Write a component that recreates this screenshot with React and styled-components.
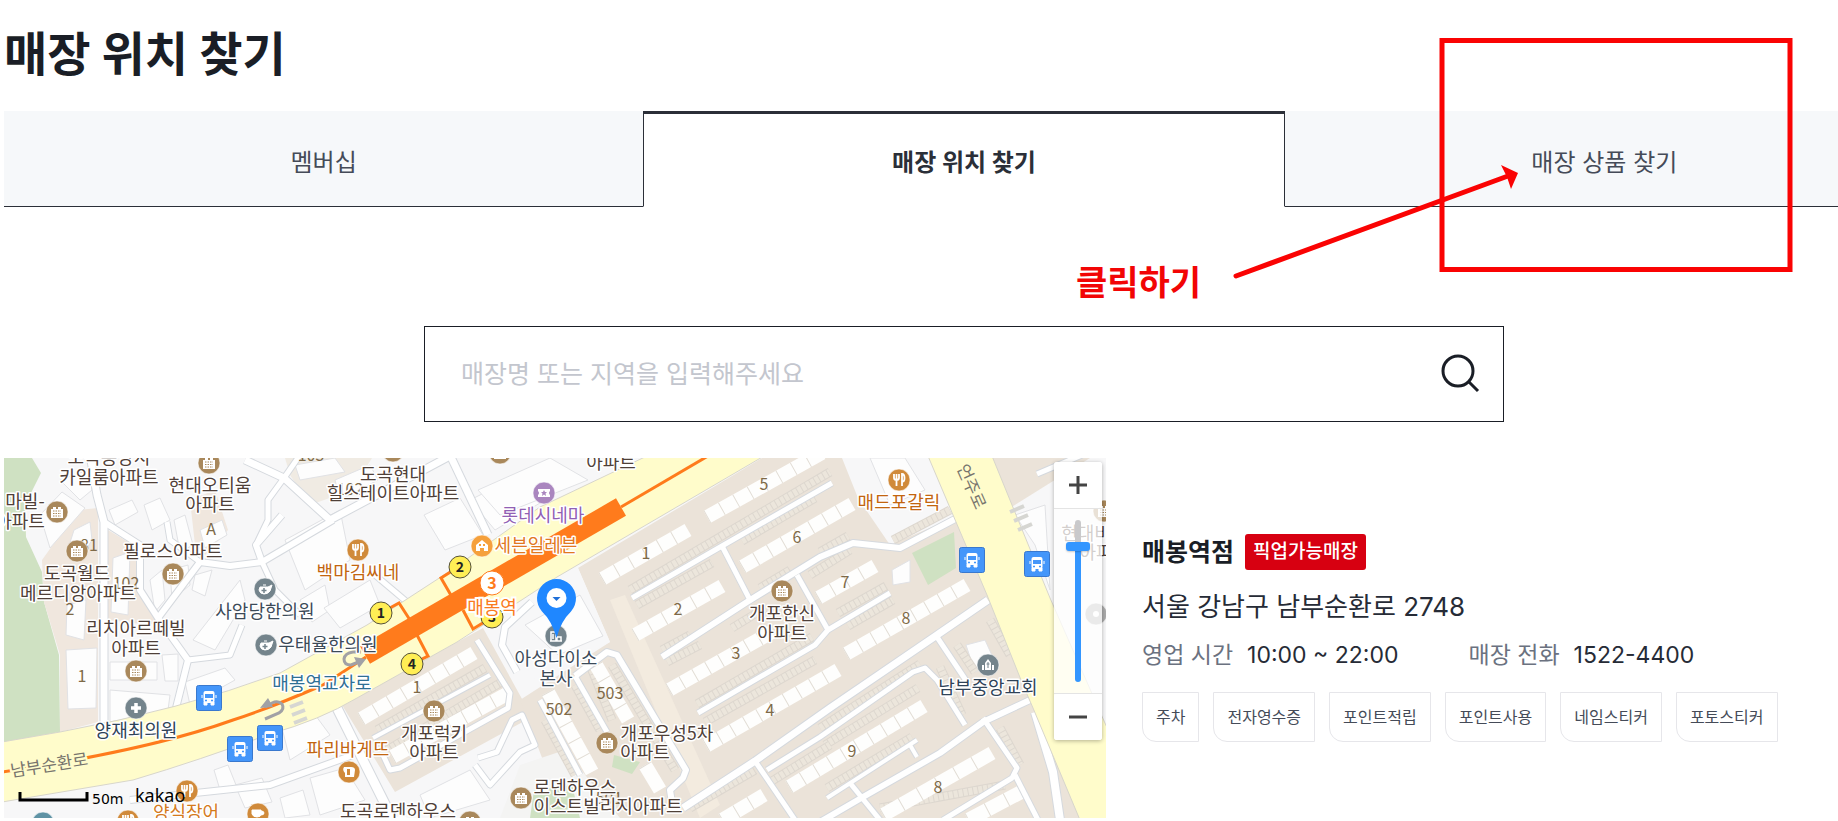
import React, { useState } from "react";
import styled, { createGlobalStyle, css } from "styled-components";

const GlobalStyle = createGlobalStyle`
  * {
    box-sizing: border-box;
  }
  body {
    margin: 0;
    background: #fff;
    color: #1a1e26;
    font-family: Inter, "Noto Sans CJK KR", sans-serif;
  }
`;

const tabs = ["멤버십", "매장 위치 찾기", "매장 상품 찾기"];

const services = [
  "주차",
  "전자영수증",
  "포인트적립",
  "포인트사용",
  "네임스티커",
  "포토스티커",
];

const Page = styled.div`
  position: relative;
  overflow: hidden;
`;

const Content = styled.main`
  min-width: 1924px;
  padding: 16px 0 3px 4px;
`;

const Title = styled.h1`
  margin: 0 0 19px;
  font-size: 47px;
  line-height: 76px;
  font-weight: 700;
`;

const TabList = styled.div`
  display: flex;
`;

const Tab = styled.button`
  flex: 1 1 0;
  height: 96px;
  padding: 3px 0 0;
  border: 0;
  border-bottom: 1px solid #2b2f38;
  background: #f6f8fa;
  color: #454b58;
  font-family: inherit;
  font-size: 24px;
  cursor: pointer;
  ${({ $active }) =>
    $active &&
    css`
      padding: 0;
      border: 1px solid #2b2f38;
      border-top-width: 3px;
      border-bottom-color: #fff;
      background: #fff;
      color: #2b2f38;
      font-weight: 700;
    `}
`;

const SearchForm = styled.form`
  display: flex;
  align-items: center;
  width: 1080px;
  height: 96px;
  margin: 119px auto 36px;
  padding: 0 18px 0 36px;
  border: 1px solid #1a1e26;
`;

const SearchInput = styled.input`
  flex: 1;
  padding: 0;
  border: 0;
  outline: 0;
  font-family: inherit;
  font-size: 25px;
  &::placeholder {
    color: #c3c6ce;
  }
`;

const SearchButton = styled.button`
  display: flex;
  padding: 0;
  border: 0;
  background: none;
  cursor: pointer;
`;

const Result = styled.div`
  display: flex;
  align-items: flex-start;
  gap: 36px;
`;

const MapBox = styled.div`
  position: relative;
  flex: 0 0 1102px;
`;

const MapSvg = styled.svg`
  display: block;
  width: 100%;
  font-family: "Noto Sans CJK KR", sans-serif;
`;

const ZoomControl = styled.div`
  position: absolute;
  top: 4px;
  right: 4px;
  display: flex;
  flex-direction: column;
  width: 48px;
  border-radius: 3px;
  background: rgba(255, 255, 255, 0.75);
  box-shadow: 0 1px 4px rgba(0, 0, 0, 0.3);
`;

const ZoomButton = styled.button`
  display: flex;
  align-items: center;
  justify-content: center;
  height: 46px;
  padding: 0;
  border: 0;
  border-radius: 3px;
  background: #fff;
  cursor: pointer;
`;

const ZoomTrack = styled.div`
  display: flex;
  justify-content: center;
  padding: 11px 0;
  border-top: 1px solid #e4e4e4;
  border-bottom: 1px solid #e4e4e4;
`;

const ZoomRange = styled.input`
  appearance: none;
  writing-mode: vertical-lr;
  direction: rtl;
  width: 24px;
  height: 162px;
  margin: 0;
  background: none;
  &::-webkit-slider-runnable-track {
    width: 6px;
    border-radius: 3px;
    background: linear-gradient(#c9c9cb 15%, #3396ff 15%);
  }
  &::-webkit-slider-thumb {
    appearance: none;
    width: 24px;
    height: 9px;
    margin-left: -9px;
    border-radius: 3px;
    background: #3396ff;
    box-shadow: 0 1px 2px rgba(0, 0, 0, 0.2);
  }
`;

const Store = styled.section`
  padding-top: 76px;
`;

const StoreHead = styled.div`
  display: flex;
  align-items: center;
  gap: 11px;
`;

const StoreName = styled.h2`
  margin: 0;
  font-size: 25px;
  line-height: 36px;
`;

const Badge = styled.span`
  padding: 0 8px;
  border-radius: 3px;
  background: #d70011;
  color: #fff;
  font-size: 19px;
  font-weight: 500;
  line-height: 36px;
`;

const Address = styled.p`
  margin: 18px 0 10px;
  color: #262b36;
  font-size: 26px;
  line-height: 38px;
`;

const Facts = styled.dl`
  display: flex;
  margin: 0 0 18px;
  font-size: 23px;
  line-height: 38px;
`;

const FactName = styled.dt`
  margin-right: 14px;
  color: #6b7280;
`;

const FactValue = styled.dd`
  margin: 0 70px 0 0;
  color: #262b36;
`;

const ServiceList = styled.ul`
  display: flex;
  gap: 14px;
  margin: 0;
  padding: 0;
  list-style: none;
`;

const Service = styled.li`
  padding: 0 13px;
  border: 1px solid #e6e6ea;
  border-bottom-left-radius: 14px;
  color: #454b58;
  font-size: 16px;
  line-height: 48px;
`;

const NoteArrow = styled.svg`
  position: absolute;
  top: 38px;
  left: 1230px;
  pointer-events: none;
`;

const NoteText = styled.strong`
  position: absolute;
  top: 260px;
  left: 1076px;
  color: #f20505;
  font-size: 34px;
  line-height: 46px;
`;

// Map data, in map units
const whiteRoads = [
  ["M90 455 97 495 104 522V730", 7],
  ["M104 522 140 545V590L158 618 188 660 175 712", 6],
  ["M158 618 200 562 230 566 262 562 256 545 282 515", 6],
  ["M167 522 170 540 200 562", 5],
  ["M188 660 230 655 242 625", 5],
  ["M262 562 275 590 300 615", 5],
  ["M245 460 284 478 330 520 450 456", 7],
  ["M284 478 268 500 268 520 256 545", 5],
  ["M284 478 300 455", 5],
  ["M262 562 333 520", 6],
  ["M450 455 488 535", 7],
  ["M375 575 407 602", 5],
  ["M130 800 270 785 353 755", 6],
  ["M337 708 393 820", 9],
  ["M383 755 390 770 400 768 508 708 510 693 477 640", 5],
  ["M373 738 490 675", 4],
  ["M517 672 502 645 505 627 532 602", 6],
  ["M478 758 497 752 512 720 522 715 535 745 520 752 490 785 475 765", 5],
  ["M575 676 607 652 617 655 686 770 683 778 670 790 672 803", 6],
  ["M575 676 607 732", 5],
  ["M540 700 580 775", 5],
  ["M632 598 722 546 832 483", 5],
  ["M662 657 747 602 820 557 853 543 900 548 957 518", 6],
  ["M722 546 750 600", 5],
  ["M698 713 815 645 828 630 890 593", 5],
  ["M797 575 828 630", 5],
  ["M683 808 755 761 830 708 937 635 988 600", 7],
  ["M767 770 820 737 913 672 925 668 937 680 965 725", 5],
  ["M755 761 795 820", 5],
  ["M827 798 917 740", 4],
  ["M910 745 917 757", 4],
  ["M820 822 863 797 940 753 983 722 1030 700", 6],
  ["M937 637 967 682", 5],
  ["M983 718 1017 768 1012 778 943 820", 5],
  ["M1015 775 1038 820", 5],
  ["M850 783 880 820", 5],
  ["M1035 712 1053 772 1060 820", 8],
  ["M1037 474 1082 455", 5],
];

const parking = [
  "M630 590 830 472",
  "M637 605 712 563",
  "M742 541 815 498",
  "M662 650 690 635",
  "M667 662 700 645",
  "M732 628 765 608",
  "M760 588 790 570",
  "M810 575 850 550",
  "M697 704 812 637",
  "M705 722 815 660",
  "M820 552 848 536",
  "M893 540 950 510",
  "M838 613 886 586",
  "M848 626 893 600",
  "M820 728 920 664",
  "M825 745 918 688",
  "M940 667 962 715",
  "M772 781 830 745",
  "M827 788 912 737",
  "M690 808 755 770",
  "M880 808 1005 785",
  "M1000 728 1020 765",
  "M957 645 975 672",
  "M990 620 1010 655",
  "M377 730 485 668",
  "M387 750 505 680",
  "M590 665 612 720",
  "M612 665 675 770",
  "M545 720 575 775",
  "M575 685 600 730",
];

// x1, y1, x2, y2, number of units
const blocks = [
  [602, 579, 688, 530, 6],
  [707, 517, 822, 453, 8],
  [742, 567, 852, 504, 8],
  [635, 635, 722, 586, 6],
  [669, 690, 772, 632, 8],
  [706, 746, 838, 670, 10],
  [818, 598, 875, 566, 4],
  [846, 654, 967, 585, 9],
  [789, 787, 924, 706, 10],
  [883, 815, 992, 753, 6],
  [722, 820, 764, 795, 3],
  [361, 719, 474, 653, 8],
  [392, 757, 507, 694, 8],
  [548, 692, 592, 772, 5],
  [596, 665, 628, 720, 4],
  [645, 765, 660, 790, 1],
  [968, 820, 1025, 790, 3],
];

const buildings = [
  "M66 650 97 648 96 708 68 709z",
  "M67 605 86 600 84 640 66 635z",
  "M74 530 90 522 92 540 80 560 67 552z",
  "M113 558 130 552 128 615 111 612z",
  "M40 515 62 492 85 508 50 548z",
  "M60 480 88 470 92 490 80 500z",
  "M109 510 132 500 138 512 115 525z",
  "M144 505 160 498 170 520 152 530z",
  "M174 520 185 515 193 545 180 552z",
  "M200 530 222 520 227 535 205 548z",
  "M150 580 162 570 165 600 155 612z",
  "M170 570 188 565 190 585 172 600z",
  "M195 575 212 570 205 596 192 590z",
  "M110 662 157 662 157 680 110 680z",
  "M162 655 178 654 178 681 165 681z",
  "M110 690 170 695 168 710 110 722z",
  "M193 640 240 580 245 600 215 650z",
  "M185 682 225 668 235 680 190 705z",
  "M285 540 340 510 350 560 305 590z",
  "M300 600 325 585 330 610 312 622z",
  "M324 608 370 580 380 605 340 628z",
  "M424 515 460 498 483 535 445 550z",
  "M470 500 530 470 545 500 495 530z",
  "M478 490 550 458 588 480 500 515z",
  "M525 625 580 595 603 636 558 655z",
  "M280 720 310 708 330 735 290 760z",
  "M235 785 262 778 272 802 245 808z",
  "M214 770 228 765 236 785 220 790z",
  "M280 798 303 790 310 815 285 818z",
  "M310 778 345 768 365 800 320 815z",
  "M420 795 470 770 490 800 430 818z",
  "M335 480 370 465 378 480 340 500z",
  "M295 465 335 458 345 472 300 480z",
  "M870 458 905 458 925 490 890 505z",
  "M892 570 910 560 910 582 893 585z",
  "M966 645 985 640 995 662 975 672z",
  "M1015 515 1045 505 1050 590 1035 545z",
];

const labels = [
  ["도곡동양지", 109, 464],
  ["카일룸아파트", 109, 484],
  ["현대오티움", 210, 492],
  ["아파트", 210, 511],
  ["마빌-", 25, 508],
  ["아파트", 20, 528],
  ["필로스아파트", 173, 558],
  ["도곡월드", 77, 580],
  ["메르디앙아파트", 78, 600],
  ["리치아르떼빌", 136, 635],
  ["아파트", 136, 655],
  ["사암당한의원", 265, 618, "#3c4a58"],
  ["우태율한의원", 328, 651, "#3c4a58"],
  ["양재최의원", 136, 737, "#2f4358"],
  ["매봉역교차로", 322, 690, "#2f6f94"],
  ["도곡현대", 393, 481],
  ["힐스테이트아파트", 393, 500],
  ["백마김씨네", 358, 579, "#c2650f"],
  ["롯데시네마", 543, 522, "#9160b4"],
  ["세븐일레븐", 536, 552, "#e27820"],
  ["아파트", 611, 469],
  ["파리바게뜨", 348, 756, "#c2650f"],
  ["개포럭키", 434, 740],
  ["아파트", 434, 759],
  ["도곡로덴하우스", 398, 818],
  ["로덴하우스", 575, 794],
  ["이스트빌리지아파트", 608, 813],
  ["아성다이소", 556, 665, "#3c4a58"],
  ["본사", 556, 685, "#3c4a58"],
  ["개포우성5차", 667, 740],
  ["아파트", 645, 759],
  ["개포한신", 782, 620],
  ["아파트", 782, 640],
  ["매드포갈릭", 899, 509, "#c2650f"],
  ["남부중앙교회", 988, 694, "#2f4358"],
  ["양식장어", 186, 819, "#d47a1c"],
  ["현대비", 1086, 540],
  ["아파", 1096, 559],
];

const numbers = [
  ["105", 311, 461],
  ["102", 350, 495],
  ["A", 211, 535],
  ["81", 89, 551],
  ["102", 126, 589],
  ["2", 70, 615],
  ["1", 82, 682],
  ["1", 417, 693],
  ["503", 610, 699],
  ["502", 559, 715],
  ["1", 646, 559],
  ["5", 764, 490],
  ["6", 797, 543],
  ["2", 678, 615],
  ["3", 736, 659],
  ["4", 770, 716],
  ["7", 845, 588],
  ["8", 906, 624],
  ["9", 852, 757],
  ["501", 609, 804],
  ["8", 938, 793],
];

const exits = [
  [1, 381, 613],
  [2, 460, 567],
  [3, 492, 617],
  [4, 412, 664],
];

const glyphs = {
  apartment: (
    <>
      <path d="M-6-3h2v-2h3v2h2v-2h3v2h2v9H-6z" fill="#fff" />
      <path
        d="M-4-1h8M-4 1.500h8M-4 4h8"
        stroke="#a9885b"
        strokeDasharray="1.500 1"
      />
    </>
  ),
  food: (
    <path
      d="M-5-6v4q0 2 2.500 2t2.500-2v-4M-2.500-6V6M3 6V-6q2.500 0 2.500 4T3 1.500"
      stroke="#fff"
      strokeWidth="1.800"
      fill="none"
    />
  ),
  bread: (
    <>
      <path d="M-5-5H2q4 0 4 3L5 5h-9V1q-3-3-1-6z" fill="#fff" />
      <path d="M-2-3h3v6h-3z" fill="#d08a3a" />
    </>
  ),
  cup: (
    <path
      d="M-6-4H3V0q0 3-4 3t-5-3zM3-3q3 0 3 2T3 1"
      fill="#fff"
      stroke="#fff"
    />
  ),
  herb: (
    <>
      <path
        d="M-5-2H3L7-4 5 2Q3 5-1 5T-6 1zM-2-4h3"
        fill="#fff"
        stroke="#fff"
      />
      <path d="M-1-1v5M-3.500 1.500h5" stroke="#74848c" strokeWidth="1.500" />
    </>
  ),
  plus: <path d="M0-5V5M-5 0H5" stroke="#fff" strokeWidth="3.500" />,
  ticket: (
    <>
      <path d="M-6-4H6v2q-2 2 0 4v2H-6V2q2-2 0-4z" fill="#fff" />
      <path d="m0-3 1 2h2L1.500.500 2 3 0 1.500-2 3l.500-2.500L-3-1h2z" fill="#aa86bf" />
    </>
  ),
  shop: (
    <>
      <path d="M-6-1 0-6 6-1V5H2V2h-4v3h-4z" fill="#fff" />
      <path d="M-3-1h2M1-1h2" stroke="#f5a03c" strokeWidth="2" />
    </>
  ),
  office: (
    <path
      d="M-5 5V-4h5v9M1 5v-4h4v4M-6 5H6M-3-2v5"
      stroke="#fff"
      strokeWidth="1.500"
      fill="none"
    />
  ),
  church: (
    <>
      <path d="M-3 5V-2L0-6 3-2V5zM-6 5V0h2v5zM4 5V0h2v5z" fill="#fff" />
      <path d="M0-3v6M-1.500-1h3" stroke="#74848c" />
    </>
  ),
  dot: <circle r="3" fill="#fff" />,
};

const pois = [
  ["apartment", 57, 512],
  ["apartment", 77, 551],
  ["apartment", 173, 574],
  ["apartment", 209, 463],
  ["apartment", 136, 671],
  ["apartment", 393, 451],
  ["apartment", 500, 453],
  ["apartment", 434, 711],
  ["apartment", 470, 822],
  ["apartment", 521, 798],
  ["apartment", 607, 743],
  ["apartment", 782, 591],
  ["apartment", 1104, 511],
  ["food", 358, 550, "#d08a3a"],
  ["food", 899, 480, "#d08a3a"],
  ["food", 187, 791, "#d08a3a"],
  ["food", 128, 821, "#d08a3a"],
  ["bread", 349, 772, "#d08a3a"],
  ["cup", 258, 814, "#d08a3a"],
  ["herb", 265, 589, "#74848c"],
  ["herb", 266, 645, "#74848c"],
  ["plus", 136, 708, "#74848c"],
  ["plus", 43, 823, "#5f93a5"],
  ["dot", 1096, 614, "#aaa"],
  ["ticket", 544, 493, "#aa86bf"],
  ["shop", 482, 546, "#f5a03c"],
  ["office", 556, 636, "#74848c"],
  ["church", 988, 665, "#74848c"],
];

const busStops = [
  [209, 698],
  [240, 749],
  [270, 738],
  [972, 560],
  [1037, 564],
];

const Poi = ({ kind, x, y, color = "#a9885b" }) => (
  <g transform={`translate(${x} ${y})`}>
    <circle r="11" fill={color} stroke="#fff" strokeOpacity="0.600" />
    {glyphs[kind]}
  </g>
);

const BusStop = ({ x, y }) => (
  <g transform={`translate(${x} ${y})`}>
    <rect
      x="-12.500"
      y="-12.500"
      width="25"
      height="25"
      rx="2"
      fill="#4496fa"
      stroke="#3978ce"
    />
    <rect x="-5.500" y="-7" width="11" height="12" rx="2" fill="#fff" />
    <path d="M-5 4h3v3h-3zM2 4h3v3H2zM-7-3v3M7-3v3" fill="#fff" stroke="#fff" />
    <path d="M-4-4h8v4h-8z" fill="#4496fa" />
    <path d="M-4 2.500h2M2 2.500h2" stroke="#4496fa" strokeWidth="1.500" />
  </g>
);

const Block = ({ x1, y1, x2, y2, units }) => {
  const length = Math.hypot(x2 - x1, y2 - y1);
  const unit = length / units;
  return (
    <g stroke="#fefefd" strokeWidth="14">
      <path d={`M${x1} ${y1}L${x2} ${y2}`} />
      <path
        d={`M${x1} ${y1}L${x2} ${y2}`}
        stroke="#e2ddd5"
        strokeDasharray={`1 ${unit - 1}`}
        strokeDashoffset={-unit}
      />
    </g>
  );
};

const StoreMap = () => (
  <MapSvg viewBox="4 458 1102 360" role="img" aria-label="매장 지도">
    <rect x="4" y="458" width="1102" height="360" fill="#f7f7f8" />
    <path
      d="M4 458H32L41 473 25 505 26 537 42 572 44 602 59 655 60 732 4 742z"
      fill="#cfe1c2"
    />
    <path d="M60 732V655L44 602 42 560 78 510 98 508V722z" fill="#f0e7de" />
    <path
      d="M108 530 138 548 142 600 158 620 150 625 108 620zM190 500 215 490 228 530 205 555 195 545z"
      fill="#f0e7de"
    />
    <path d="M285 458H372L352 490 310 505 290 475z" fill="#f0ebe3" />
    <path d="M342 705 483 628 527 708 560 690 600 818H565L530 718 395 792z" fill="#ebe3d9" />
    <path
      d="M578 568 762 458H842L858 498 890 545 955 517 1106 818H565L520 700 610 642z"
      fill="#ebe3d9"
    />
    <path d="M578 568 610 642 535 680 500 625z" fill="#f7f7f8" />
    <path d="M520 765 565 750 620 818H500z" fill="#f4f4f3" />
    <path d="M610 600 625 595 720 805 700 818z" fill="#f3ebdf" />
    <path d="M534 790 572 785 580 818H530zM614 755 640 762 632 774 612 767z" fill="#cfe1c2" />
    <path d="M992 458H1106V730L1050 598z" fill="#f7f7f8" />
    <path d="M992 458H1090L1010 508z" fill="#ebe3d9" />
    <path d="M912 553 954 532 956 568 928 585z" fill="#cfe1c2" />

    <g fill="#fdfdfd" stroke="#e1e2e5">
      {buildings.map((d) => (
        <path key={d} d={d} />
      ))}
    </g>
    <g fill="none">
      {parking.map((d) => (
        <g key={d}>
          <path d={d} stroke="#ddd7cf" strokeWidth="9" />
          <path
            d={d}
            stroke="#ece6dc"
            strokeWidth="7"
            strokeDasharray="4 1"
          />
        </g>
      ))}
    </g>
    {blocks.map(([x1, y1, x2, y2, units]) => (
      <Block key={`${x1}-${y1}`} x1={x1} y1={y1} x2={x2} y2={y2} units={units} />
    ))}
    <g fill="none" stroke="#d5d9de" strokeLinejoin="round">
      {whiteRoads.map(([d, width]) => (
        <path key={d} d={d} strokeWidth={width + 2} />
      ))}
    </g>
    <g fill="none" stroke="#fff" strokeLinejoin="round">
      {whiteRoads.map(([d, width]) => (
        <path key={d} d={d} strokeWidth={width} />
      ))}
    </g>

    <g fill="#fffccb" stroke="#d8d6cb">
      <path d="M2 742 60 732Q180 710 280 673L367 625 447 573 540 507 647 456H764L557 577 457 642 357 698Q320 720 270 734 200 760 133 780L2 802z" />
      <path d="M928 456 987 595 1023 685 1033 708 1080 820H1108V730L1050 598 992 456z" />
    </g>
    <g stroke="#d6d6d2" strokeWidth="4">
      <path d="M1010 512l14-6M1014 521l14-6M1018 530l14-6M290 707l13-5M292 715l13-5M294 723l13-5" />
    </g>

    <g fill="none" stroke="#ff7b1c" strokeWidth="3">
      <path d="M2 772Q150 750 233 720 270 708 323 685L366 657" />
      <path d="M621 507 708 456" />
      <path d="M365 655 621 507" strokeWidth="20" />
      <path d="M452 597 441 578 452 571M410 620 399 603 388 609M463 610 473 629 486 621M417 635 428 656 418 661" />
    </g>
    <g fill="none" stroke="#a1a1a5" strokeWidth="3">
      <path d="M361 652h-8q-8 1-9 7 0 6 7 6l10-4" />
      <path d="M265 719l14-6q6-4 3-9-4-4-10-1l-7 4" />
    </g>
    <path d="M354 657l12 2-7 9zM268 698l-8 10 13-1z" fill="#a1a1a5" />

    <g fontSize="16" fill="#7e6a48" textAnchor="middle">
      {numbers.map(([text, x, y]) => (
        <text key={`${x}-${y}`} x={x} y={y}>
          {text}
        </text>
      ))}
    </g>

    {busStops.map(([x, y]) => (
      <BusStop key={x} x={x} y={y} />
    ))}
    {pois.map(([kind, x, y, color]) => (
      <Poi key={`${x}-${y}`} kind={kind} x={x} y={y} color={color} />
    ))}

    <g fontSize="14" fontWeight="700" textAnchor="middle">
      {exits.map(([number, x, y]) => (
        <g key={number}>
          <circle cx={x} cy={y} r="11" fill="#ffee55" stroke="#55513a" />
          <text x={x} y={y + 5} fill="#222">
            {number}
          </text>
        </g>
      ))}
      <circle cx="492" cy="583" r="12" fill="#fff" stroke="#ff7b1c" strokeWidth="1" />
      <text x="492" y="589" fontSize="16" fill="#ff7b1c">
        3
      </text>
      <text
        x="492"
        y="614"
        fontSize="18"
        fontWeight="400"
        fill="#fa7a20"
        stroke="#fff"
        strokeWidth="4"
        paintOrder="stroke"
      >
        매봉역
      </text>
    </g>

    <g
      fontSize="18"
      fontWeight="400"
      textAnchor="middle"
      stroke="#fff"
      strokeWidth="3"
      strokeLinejoin="round"
      paintOrder="stroke"
    >
      {labels.map(([text, x, y, color = "#4f4038"]) => (
        <text key={`${x}-${y}`} x={x} y={y} fill={color}>
          {text}
        </text>
      ))}
    </g>
    <g
      fontSize="17"
      fill="#77746d"
      textAnchor="middle"
      stroke="#fffccb"
      strokeWidth="4"
      paintOrder="stroke"
    >
      <text transform="translate(50 771) rotate(-9)">남부순환로</text>
      <text transform="translate(966 489) rotate(66)">언주로</text>
    </g>

    <path
      d="M556.500 638Q552 621 542 611.500A19.500 19.500 0 1 1 571 611.500Q561 621 556.500 638z"
      fill="#1f87ff"
    />
    <circle cx="556.500" cy="598" r="10" fill="#fff" />
    <path d="M552.500 597h8l-4 4z" fill="#1f6fd8" />

    <path d="M20 792v8h67v-8" fill="none" stroke="#000" strokeWidth="3" />
    <text x="92" y="804" fontSize="14" fontFamily="DejaVu Sans, sans-serif">
      50m
    </text>
    <text x="135" y="802" fontSize="18" fontFamily="Noto Sans, sans-serif">
      kakao
    </text>
  </MapSvg>
);

const App = () => {
  const [activeTab, setActiveTab] = useState(1);
  const [keyword, setKeyword] = useState("");
  const [zoom, setZoom] = useState(12);

  return (
    <Page>
      <GlobalStyle />
      <Content>
        <Title>매장 위치 찾기</Title>
        <TabList role="tablist">
          {tabs.map((name, index) => (
            <Tab
              key={name}
              type="button"
              role="tab"
              aria-selected={index === activeTab}
              $active={index === activeTab}
              onClick={() => setActiveTab(index)}
            >
              {name}
            </Tab>
          ))}
        </TabList>

        <SearchForm role="search" onSubmit={(e) => e.preventDefault()}>
          <SearchInput
            type="text"
            aria-label="매장 검색"
            placeholder="매장명 또는 지역을 입력해주세요"
            value={keyword}
            onChange={(e) => setKeyword(e.target.value)}
          />
          <SearchButton type="submit" aria-label="검색">
            <svg width="48" height="48" fill="none" stroke="#1a1e26" strokeWidth="3">
              <circle cx="21" cy="21" r="15" />
              <path d="M32 32l9 9" />
            </svg>
          </SearchButton>
        </SearchForm>

        <Result>
          <MapBox>
            <StoreMap />
            <ZoomControl>
              <ZoomButton
                type="button"
                aria-label="확대"
                onClick={() => setZoom(Math.min(14, zoom + 1))}
              >
                <svg width="18" height="18" stroke="#444" strokeWidth="3">
                  <path d="M9 0v18M0 9h18" />
                </svg>
              </ZoomButton>
              <ZoomTrack>
                <ZoomRange
                  type="range"
                  aria-label="지도 배율"
                  min="0"
                  max="14"
                  value={zoom}
                  onChange={(e) => setZoom(Number(e.target.value))}
                />
              </ZoomTrack>
              <ZoomButton
                type="button"
                aria-label="축소"
                onClick={() => setZoom(Math.max(0, zoom - 1))}
              >
                <svg width="18" height="18" stroke="#444" strokeWidth="3">
                  <path d="M0 9h18" />
                </svg>
              </ZoomButton>
            </ZoomControl>
          </MapBox>

          <Store>
            <StoreHead>
              <StoreName>매봉역점</StoreName>
              <Badge>픽업가능매장</Badge>
            </StoreHead>
            <Address>서울 강남구 남부순환로 2748</Address>
            <Facts>
              <FactName>영업 시간</FactName>
              <FactValue>10:00 ~ 22:00</FactValue>
              <FactName>매장 전화</FactName>
              <FactValue>1522-4400</FactValue>
            </Facts>
            <ServiceList>
              {services.map((name) => (
                <Service key={name}>{name}</Service>
              ))}
            </ServiceList>
          </Store>
        </Result>
      </Content>

      <NoteText>클릭하기</NoteText>
      <NoteArrow width="564" height="244" fill="none" stroke="#fa0303" strokeWidth="5">
        <path d="M212 2.500h348v229H212z" />
        <path d="M6 238 278 138" strokeLinecap="round" />
        <path d="M288 135 271 127 277 139 281 151z" fill="#fa0303" stroke="none" />
      </NoteArrow>
    </Page>
  );
};

export default App;
